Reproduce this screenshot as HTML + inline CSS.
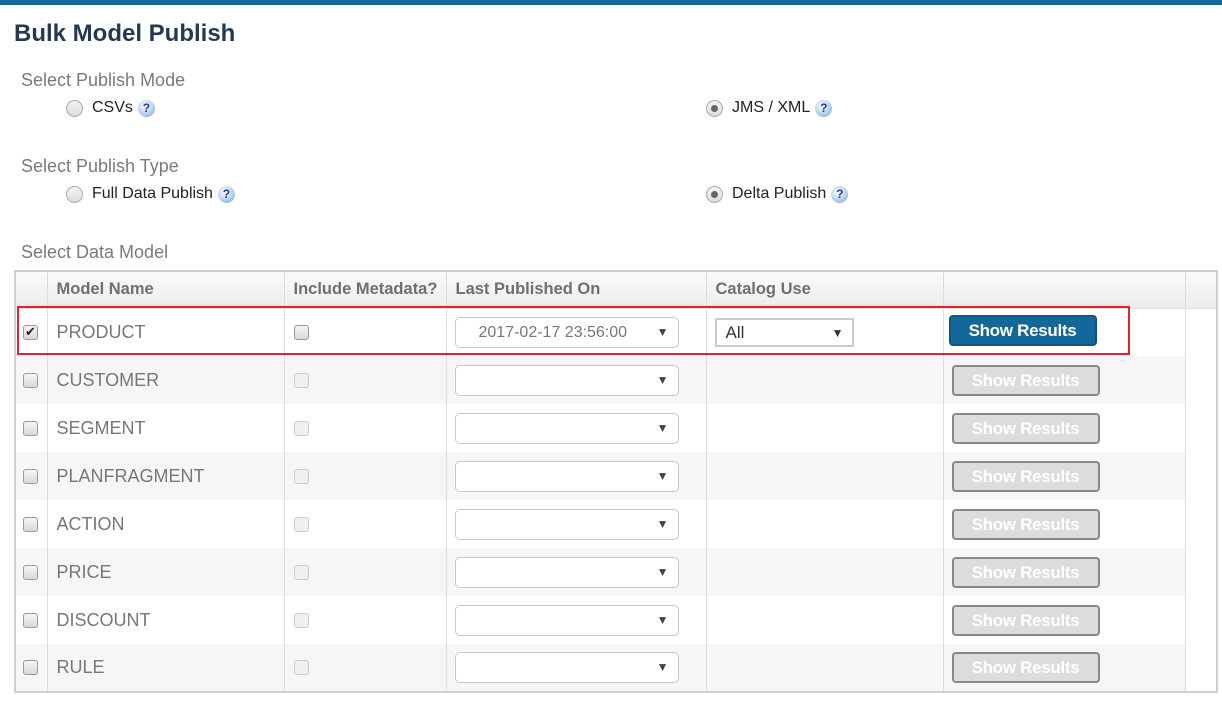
<!DOCTYPE html>
<html><head><meta charset="utf-8"><style>
*{box-sizing:border-box;margin:0;padding:0}
body{width:1222px;height:702px;background:#fff;font-family:"Liberation Sans",Arial,sans-serif;position:relative;overflow:hidden}
.bar{position:absolute;left:0;top:0;width:1222px;height:5px;background:#13679a}
h1{position:absolute;left:14px;top:20px;font-size:24px;font-weight:bold;color:#253a52}
.lbl{position:absolute;left:21px;font-size:18px;color:#7a7a7a}
.opt{position:absolute;font-size:16px;color:#222;display:flex;align-items:center}
.radio{width:17px;height:17px;border-radius:50%;border:1px solid #aaa;background:linear-gradient(#f4f4f4,#ddd);margin-right:9px;position:relative}
.radio.on::after{content:"";position:absolute;left:4px;top:4px;width:7px;height:7px;border-radius:50%;background:#666}
.help{width:17px;height:17px;border-radius:50%;background:radial-gradient(circle at 40% 35%,#fff,#aecbe8 60%,#6e9bd0);margin-left:5px;color:#1c3f8c;font-size:12px;font-weight:bold;text-align:center;line-height:17px}
table{position:absolute;left:14px;top:270px;border-collapse:collapse;table-layout:fixed;width:1202px;border:2px solid #cfcfcf}
td,th{border-left:1px solid #ddd;border-right:1px solid #ddd;height:48px;vertical-align:middle;font-size:18px;color:#777;font-weight:normal;text-align:left}
th{height:37px;background:linear-gradient(#fafafa,#ececec);font-weight:bold;font-size:16.5px;color:#6f6f6f;padding-left:9px;border-bottom:1px solid #ddd}
tr.g td{background:#f6f6f6}
tr td:last-child{background:#fff!important}
td.n{padding-left:9px}
.cb{width:15px;height:15px;border:1px solid #999;border-radius:3px;background:linear-gradient(#f5f5f5,#d8d8d8);margin-left:9px;position:relative}
.cb.d{border-color:#ccc;background:#f0f0f0}
.cb.c::after{content:"✔";position:absolute;left:1px;top:-2px;font-size:13px;color:#222}
.sel{width:224px;height:31px;margin-left:8px;border:1px solid #c8c8c8;border-radius:5px;background:#fff;position:relative;font-size:16px;color:#777;line-height:29px;padding-left:23px}
.sel::after{content:"▼";position:absolute;right:9px;top:0;font-size:12px;color:#444}
.cat{width:139px;height:29px;margin-left:8px;border:2px solid #ccc;background:#fff;position:relative;font-size:17px;color:#333;line-height:26px;padding-left:9px}
.cat::after{content:"▼";position:absolute;right:8px;top:0;font-size:12px;color:#333}
.btn{width:148px;height:31px;margin-left:8px;border:2px solid #888;border-radius:4px;background:#dcdcdc;color:#fff;font-weight:bold;font-size:17px;text-align:center;line-height:27px;letter-spacing:-0.3px}
.btn.b{background:#13679a;border-color:#0e5680;margin-left:5px;margin-top:-4px}
.red{position:absolute;left:17px;top:306px;width:1113px;height:49px;border:2px solid #e8202a}
</style></head><body>
<div class="bar"></div>
<h1>Bulk Model Publish</h1>
<div class="lbl" style="top:70px">Select Publish Mode</div>
<div class="opt" style="left:66px;top:99px"><span class="radio"></span>CSVs<span class="help">?</span></div>
<div class="opt" style="left:706px;top:99px"><span class="radio on"></span>JMS / XML<span class="help">?</span></div>
<div class="lbl" style="top:156px">Select Publish Type</div>
<div class="opt" style="left:66px;top:185px"><span class="radio"></span>Full Data Publish<span class="help">?</span></div>
<div class="opt" style="left:706px;top:185px"><span class="radio on"></span>Delta Publish<span class="help">?</span></div>
<div class="lbl" style="top:242px">Select Data Model</div>
<table>
<colgroup><col style="width:32px"><col style="width:237px"><col style="width:162px"><col style="width:260px"><col style="width:237px"><col style="width:242px"><col style="width:32px"></colgroup>
<tr><th></th><th>Model Name</th><th>Include Metadata?</th><th>Last Published On</th><th>Catalog Use</th><th></th><th></th></tr>
<tr><td><div class="cb c" style="margin-left:7px"></div></td><td class="n">PRODUCT</td><td><div class="cb"></div></td><td><div class="sel">2017-02-17 23:56:00</div></td><td><div class="cat">All</div></td><td><div class="btn b">Show Results</div></td><td></td></tr>
<tr class="g"><td><div class="cb" style="margin-left:7px"></div></td><td class="n">CUSTOMER</td><td><div class="cb d"></div></td><td><div class="sel"></div></td><td></td><td><div class="btn">Show Results</div></td><td></td></tr>
<tr><td><div class="cb" style="margin-left:7px"></div></td><td class="n">SEGMENT</td><td><div class="cb d"></div></td><td><div class="sel"></div></td><td></td><td><div class="btn">Show Results</div></td><td></td></tr>
<tr class="g"><td><div class="cb" style="margin-left:7px"></div></td><td class="n">PLANFRAGMENT</td><td><div class="cb d"></div></td><td><div class="sel"></div></td><td></td><td><div class="btn">Show Results</div></td><td></td></tr>
<tr><td><div class="cb" style="margin-left:7px"></div></td><td class="n">ACTION</td><td><div class="cb d"></div></td><td><div class="sel"></div></td><td></td><td><div class="btn">Show Results</div></td><td></td></tr>
<tr class="g"><td><div class="cb" style="margin-left:7px"></div></td><td class="n">PRICE</td><td><div class="cb d"></div></td><td><div class="sel"></div></td><td></td><td><div class="btn">Show Results</div></td><td></td></tr>
<tr><td><div class="cb" style="margin-left:7px"></div></td><td class="n">DISCOUNT</td><td><div class="cb d"></div></td><td><div class="sel"></div></td><td></td><td><div class="btn">Show Results</div></td><td></td></tr>
<tr class="g"><td><div class="cb" style="margin-left:7px"></div></td><td class="n">RULE</td><td><div class="cb d"></div></td><td><div class="sel"></div></td><td></td><td><div class="btn">Show Results</div></td><td></td></tr>
</table>
<div class="red"></div>
</body></html>
